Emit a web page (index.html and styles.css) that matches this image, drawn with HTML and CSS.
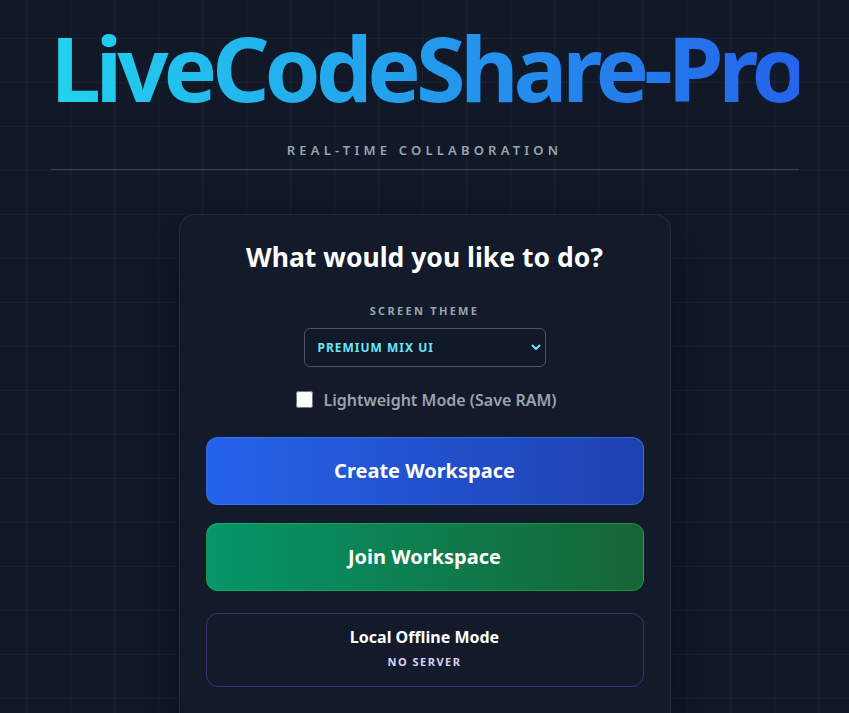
FILE: index.html
```html
<!DOCTYPE html>
<html lang="en">
<head>
    <meta charset="UTF-8">
    <meta name="viewport" content="width=device-width, initial-scale=1.0">
    <title>LiveCodeShare-Pro</title>
    <link rel="stylesheet" href="styles.css">
</head>
<body>
    <div class="page">
        <header class="brand">
            <h1 class="brand-title">LiveCodeShare-Pro</h1>
            <p class="brand-tag">Real-Time Collaboration</p>
        </header>

        <div class="card">
            <h2 class="card-title">What would you like to do?</h2>

            <label class="field-label" for="theme">Screen Theme</label>
            <div class="select-wrap">
                <select id="theme" class="theme-select">
                    <option>Premium Mix UI</option>
                    <option>Classic Dark</option>
                    <option>Light</option>
                </select>
                <svg class="select-arrow" width="12" height="12" viewBox="0 0 12 12">
                    <path d="M2.5 4.5 L6 8 L9.5 4.5" fill="none" stroke="#67e8f9" stroke-width="2" stroke-linecap="round" stroke-linejoin="round"/>
                </svg>
            </div>

            <label class="check-row">
                <input type="checkbox" id="lite">
                <span>Lightweight Mode (Save RAM)</span>
            </label>

            <button class="action action-create">Create Workspace</button>
            <button class="action action-join">Join Workspace</button>
            <button class="action action-offline">
                <span class="offline-title">Local Offline Mode</span>
                <span class="offline-sub">No Server</span>
            </button>
        </div>
    </div>
</body>
</html>
```

FILE: styles.css
```css
html, body {
    margin: 0;
    padding: 0;
}
body {
    font-family: "Noto Sans", "Open Sans", sans-serif;
    color: #f3f4f6;
    background-color: #111827;
    background-image:
        linear-gradient(rgba(255, 255, 255, 0.035) 1px, transparent 1px),
        linear-gradient(90deg, rgba(255, 255, 255, 0.035) 1px, transparent 1px);
    background-size: 44px 44px;
    background-position: 26px 38px;
    min-height: 100vh;
}
.page {
    display: flex;
    flex-direction: column;
    align-items: center;
    padding-top: 18px;
}

/* header */
.brand {
    width: 748px;
    border-bottom: 1px solid rgba(255, 255, 255, 0.18);
    text-align: center;
    padding-bottom: 10px;
}
.brand-title {
    margin: 0;
    font-size: 90px;
    font-weight: 700;
    line-height: 1.1;
    letter-spacing: -5.2px;
    white-space: nowrap;
    background: linear-gradient(90deg, #22d3ee, #2563eb);
    -webkit-background-clip: text;
    background-clip: text;
    color: transparent;
}
.brand-tag {
    margin: 26px 0 0;
    font-size: 13px;
    font-weight: 600;
    line-height: 1.2;
    letter-spacing: 4.2px;
    text-transform: uppercase;
    color: #9ca3af;
}

/* card */
.card {
    box-sizing: border-box;
    width: 492px;
    margin-top: 44px;
    padding: 25px 26px 40px;
    background: #131a2a;
    border: 1px solid rgba(255, 255, 255, 0.08);
    border-radius: 16px;
    box-shadow: 0 20px 50px rgba(0, 0, 0, 0.45);
    display: flex;
    flex-direction: column;
    align-items: center;
}
.card-title {
    margin: 0;
    font-size: 26.5px;
    font-weight: 700;
    line-height: 35px;
    color: #ffffff;
}
.field-label {
    margin-top: 28px;
    font-size: 11px;
    font-weight: 700;
    line-height: 1.4;
    letter-spacing: 2.3px;
    text-transform: uppercase;
    color: #9ca3af;
}
.select-wrap {
    position: relative;
    margin-top: 10px;
}
.theme-select {
    appearance: none;
    -webkit-appearance: none;
    box-sizing: border-box;
    width: 242px;
    height: 39px;
    padding: 0 30px 0 13px;
    background: #111827;
    border: 1px solid #4b5563;
    border-radius: 6px;
    font-family: inherit;
    font-size: 12px;
    font-weight: 700;
    letter-spacing: 1px;
    text-transform: uppercase;
    color: #67e8f9;
}
.select-arrow {
    position: absolute;
    right: 4px;
    top: 13px;
    pointer-events: none;
}
.check-row {
    margin-top: 21px;
    display: flex;
    align-items: center;
    gap: 10px;
    padding-left: 4px;
    font-size: 16px;
    font-weight: 600;
    line-height: 24px;
    color: #9ca3af;
}
.check-row input {
    width: 17px;
    height: 17px;
    margin: 0;
}

/* buttons */
.action {
    box-sizing: border-box;
    width: 100%;
    border-radius: 12px;
    font-family: inherit;
    color: #ffffff;
    cursor: pointer;
}
.action-create, .action-join {
    padding: 19px 0;
    font-size: 20px;
    font-weight: 700;
    line-height: 28px;
}
.action-create {
    margin-top: 25px;
    background: linear-gradient(90deg, #2563eb, #1e40af);
    border: 1px solid rgba(59, 130, 246, 0.6);
}
.action-join {
    margin-top: 18px;
    background: linear-gradient(90deg, #059669, #166534);
    border: 1px solid rgba(34, 197, 94, 0.45);
}
.action-offline {
    margin-top: 22px;
    padding: 12px 0 17px;
    background: transparent;
    border: 1px solid rgba(139, 92, 246, 0.35);
    display: flex;
    flex-direction: column;
    align-items: center;
    gap: 6px;
}
.offline-title {
    font-size: 16px;
    font-weight: 700;
    line-height: 22px;
}
.offline-sub {
    font-size: 11px;
    font-weight: 700;
    line-height: 15px;
    letter-spacing: 1.5px;
    text-transform: uppercase;
    color: #ddd0fb;
}
```
